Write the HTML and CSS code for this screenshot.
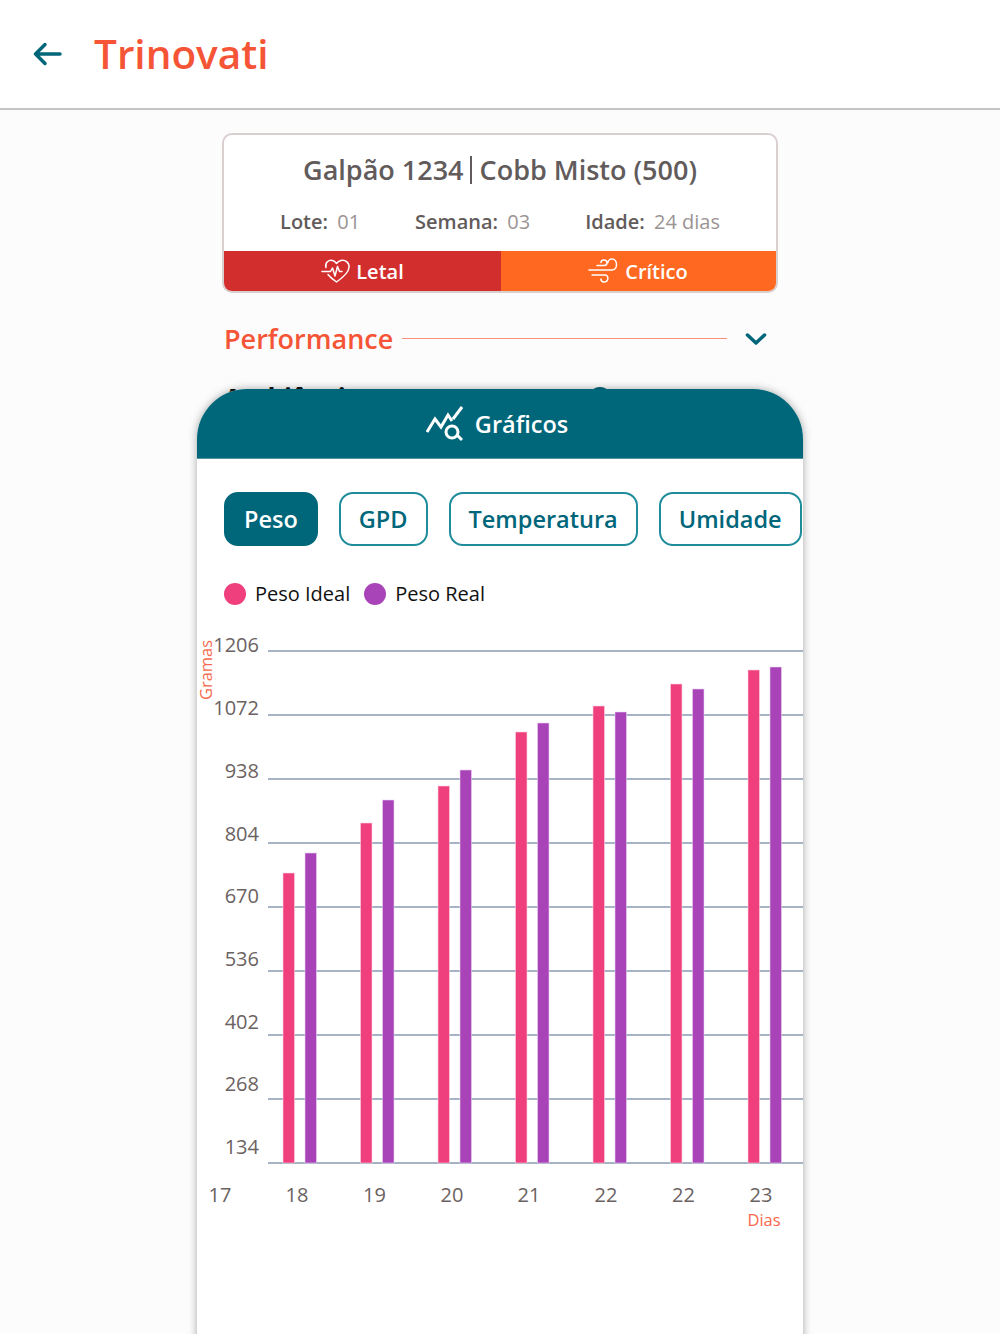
FILE: index.html
```html
<!DOCTYPE html>
<html lang="pt-BR">
<head>
<meta charset="utf-8">
<title>Trinovati</title>
<link rel="stylesheet" href="styles.css">
</head>
<body>
<header class="topbar">
  <svg class="back" width="30" height="30" viewBox="0 0 30 30"><path d="M28 15H3.500M13 5.500 3.500 15 13 24.500"/></svg>
  <h1 class="brand">Trinovati</h1>
</header>
<main class="page">
  <section class="summary">
    <h2 class="summary-title">Galpão 1234<span class="sep"></span>Cobb Misto (500)</h2>
    <div class="facts">
      <span><b>Lote:</b> 01</span>
      <span><b>Semana:</b> 03</span>
      <span><b>Idade:</b> 24 dias</span>
    </div>
    <div class="status">
      <div class="status-item lethal">
        <svg class="status-icon" width="30" height="26" viewBox="0 0 30 26"><path d="M5 9.500C3.500 4.500 8 1.500 11.500 2.500 13 3 14.500 4 15.500 5.500 16.500 4 18 3 20 2.500 24.500 1.500 28.500 5 28 9.500 27.500 15 20.500 20.500 15.500 24 12 21.500 9 19 7 16.500M1 13.500H9.500L11.500 10 14 18 16.500 8.500 18.500 13.500H21"/></svg>
        Letal
      </div>
      <div class="status-item critical">
        <svg class="status-icon" width="32" height="26" viewBox="0 0 32 26"><path d="M10 7.500H17C21 7.500 21 2 17 2 15.500 2 14 3 14 4.500M2 12H25C31 12 31 1 25 1 22.500 1 21 3 21 4.500M5 17H18C22 17 22 24 17 24 15 24 14 22.500 14 21"/></svg>
        Crítico
      </div>
    </div>
  </section>

  <div class="section-head">
    <span class="section-name">Performance</span>
    <span class="section-rule"></span>
    <svg class="chevron" width="22" height="14" viewBox="0 0 22 14"><path d="M2.500 3 11 11 19.500 3"/></svg>
  </div>

  <div class="behind">
    <span>Ambiência</span>
    <span class="behind-icon"></span>
  </div>

  <section class="sheet">
    <div class="sheet-head">
      <svg class="sheet-icon" width="37" height="36" viewBox="0 0 37 36"><path d="M1 26 9 13 15 21 22 9 26 15M27 13 36 1M31 29 36 34"/><circle cx="26" cy="26" r="6"/></svg>
      <span>Gráficos</span>
    </div>
    <div class="tabs">
      <button class="tab active">Peso</button>
      <button class="tab">GPD</button>
      <button class="tab">Temperatura</button>
      <button class="tab">Umidade</button>
    </div>
    <div class="legend">
      <span class="legend-item"><i class="dot ideal"></i>Peso Ideal</span>
      <span class="legend-item"><i class="dot real"></i>Peso Real</span>
    </div>
    <svg class="chart" width="606" height="620" viewBox="197 630 606 620">
      <g class="grid">
        <line x1="268" x2="803" y1="651" y2="651"/>
        <line x1="268" x2="803" y1="715" y2="715"/>
        <line x1="268" x2="803" y1="779" y2="779"/>
        <line x1="268" x2="803" y1="843" y2="843"/>
        <line x1="268" x2="803" y1="907" y2="907"/>
        <line x1="268" x2="803" y1="971" y2="971"/>
        <line x1="268" x2="803" y1="1035" y2="1035"/>
        <line x1="268" x2="803" y1="1099" y2="1099"/>
        <line x1="268" x2="803" y1="1163" y2="1163"/>
      </g>
      <g class="bars-ideal">
        <rect x="283" y="873" width="11.500" height="290"/>
        <rect x="360.500" y="823" width="11.500" height="340"/>
        <rect x="438" y="786" width="11.500" height="377"/>
        <rect x="515.500" y="732" width="11.500" height="431"/>
        <rect x="593" y="706" width="11.500" height="457"/>
        <rect x="670.500" y="684" width="11.500" height="479"/>
        <rect x="748" y="670" width="11.500" height="493"/>
      </g>
      <g class="bars-real">
        <rect x="305" y="853" width="11.500" height="310"/>
        <rect x="382.500" y="800" width="11.500" height="363"/>
        <rect x="460" y="770" width="11.500" height="393"/>
        <rect x="537.500" y="723" width="11.500" height="440"/>
        <rect x="615" y="712" width="11.500" height="451"/>
        <rect x="692.500" y="689" width="11.500" height="474"/>
        <rect x="770" y="667" width="11.500" height="496"/>
      </g>
      <g class="y-labels">
        <text x="259" y="652">1206</text>
        <text x="259" y="715">1072</text>
        <text x="259" y="778">938</text>
        <text x="259" y="841">804</text>
        <text x="259" y="903">670</text>
        <text x="259" y="966">536</text>
        <text x="259" y="1029">402</text>
        <text x="259" y="1091">268</text>
        <text x="259" y="1154">134</text>
      </g>
      <g class="x-labels">
        <text x="220" y="1202">17</text>
        <text x="297" y="1202">18</text>
        <text x="374.500" y="1202">19</text>
        <text x="452" y="1202">20</text>
        <text x="529" y="1202">21</text>
        <text x="606" y="1202">22</text>
        <text x="683.500" y="1202">22</text>
        <text x="761" y="1202">23</text>
      </g>
      <text class="axis-name" transform="translate(212 670) rotate(-90)">Gramas</text>
      <text class="axis-name" x="764" y="1226">Dias</text>
    </svg>
  </section>
</main>
</body>
</html>
```
FILE: styles.css
```css
* { box-sizing: border-box; }
html, body { margin: 0; height: 100%; }
body {
  width: 1000px;
  height: 1334px;
  overflow: hidden;
  background: #fcfcfc;
  font-family: "Open Sans", "Noto Sans", sans-serif;
}
.topbar {
  height: 110px;
  background: #fff;
  border-bottom: 2px solid #c4c4c4;
  display: flex;
  align-items: center;
  padding: 0 0 0 32px;
}
.back { fill: none; stroke: #00667a; stroke-width: 3.500; stroke-linecap: round; stroke-linejoin: round; }
.brand {
  margin: 0 0 0 32px;
  font-size: 40.500px;
  font-weight: 600;
  color: #f55536;
  line-height: 1;
}
.page { display: flex; flex-direction: column; align-items: center; position: relative; padding-top: 23px; }
.summary {
  width: 556px;
  height: 160px;
  border: 2px solid #dacfcf;
  border-radius: 10px;
  background: #fff;
  display: flex;
  flex-direction: column;
  overflow: hidden;
}
.summary-title {
  margin: 16px 0 0;
  height: 38px;
  text-align: center;
  font-size: 27px;
  line-height: 38px;
  font-weight: 600;
  color: #625b5b;
}
.sep { display: inline-block; width: 2px; height: 28px; margin: 0 8px 0 6px; background: #625b5b; vertical-align: -4px; }
.facts {
  margin-top: 19px;
  height: 28px;
  display: flex;
  justify-content: center;
  gap: 55px;
  font-size: 20px;
  line-height: 28px;
  color: #9c9393;
}
.facts b { font-weight: 600; color: #625b5b; margin-right: 4px; }
.status { margin-top: auto; height: 40px; display: flex; }
.status-item {
  display: flex;
  align-items: center;
  justify-content: center;
  gap: 5px;
  color: #fff;
  font-size: 20px;
  font-weight: 600;
}
.lethal { width: 277px; background: #d32e2e; }
.critical { flex: 1; background: #ff6820; gap: 6px; padding-right: 2px; }
.status-icon { fill: none; stroke: #fff; stroke-width: 1.500; stroke-linecap: round; stroke-linejoin: round; }
.section-head {
  width: 552px;
  height: 44px;
  margin-top: 24px;
  display: flex;
  align-items: center;
}
.section-name { font-size: 27px; font-weight: 600; color: #f55536; line-height: 44px; height: 44px; }
.section-rule { width: 325px; height: 1px; margin: 0 0 1px 9px; background: #f99080; }
.chevron { margin-left: 18px; fill: none; stroke: #00667a; stroke-width: 3.500; stroke-linecap: round; stroke-linejoin: round; }
.behind {
  width: 552px;
  margin-top: 19px;
  height: 40px;
  display: flex;
  gap: 228px;
  align-items: flex-start;
  font-size: 26px;
  font-weight: 700;
  line-height: 36px;
  color: #111;
}
.behind-icon { width: 22px; height: 22px; margin-top: 7px; border: 3px solid #00667a; border-radius: 50%; }
.sheet {
  position: absolute;
  top: 279px;
  left: 197px;
  width: 606px;
  height: 960px;
  background: #fff;
  border-radius: 50px 50px 0 0;
  box-shadow: 0 0 8px rgba(0, 0, 0, .35);
}
.sheet-head {
  height: 70px;
  padding-right: 6px;
  background: #00667a;
  border-bottom: 1px solid #4f95a3;
  border-radius: 50px 50px 0 0;
  display: flex;
  align-items: center;
  justify-content: center;
  gap: 12px;
  color: #fff;
  font-size: 23.500px;
  font-weight: 600;
}
.sheet-icon { fill: none; stroke: #fff; stroke-width: 3; }
.tabs { display: flex; gap: 21px; margin: 33px 0 0 27px; white-space: nowrap; }
.tab {
  height: 54px;
  padding: 0 18px;
  border: 2px solid #1f8c9b;
  border-radius: 14px;
  background: #fff;
  color: #00667a;
  font: 600 23.500px "Open Sans", "Noto Sans", sans-serif;
  flex: none;
}
.tab.active { background: #00667a; border-color: #00667a; color: #fff; }
.legend { display: flex; gap: 14px; margin: 34px 0 0 27px; height: 28px; align-items: center; }
.legend-item { display: flex; align-items: center; gap: 9px; font-size: 20px; color: #111; line-height: 28px; }
.dot { width: 22px; height: 22px; border-radius: 50%; }
.dot.ideal { background: #ef3f7c; }
.dot.real { background: #a944b8; }
.chart { display: block; margin-top: 22px; overflow: visible; font-family: "Open Sans", "Noto Sans", sans-serif; }
.grid line { stroke: #a6b2c6; stroke-width: 2; }
.bars-ideal rect { fill: #ef3f7c; stroke: #fcd4e2; stroke-width: .6; }
.bars-real rect { fill: #a944b8; stroke: #ecd0f0; stroke-width: .6; }
.y-labels text { font-size: 20px; fill: #6b6262; text-anchor: end; }
.x-labels text { font-size: 20px; fill: #6b6262; text-anchor: middle; }
.axis-name { font-size: 16.500px; fill: #f8694e; text-anchor: middle; }
```
